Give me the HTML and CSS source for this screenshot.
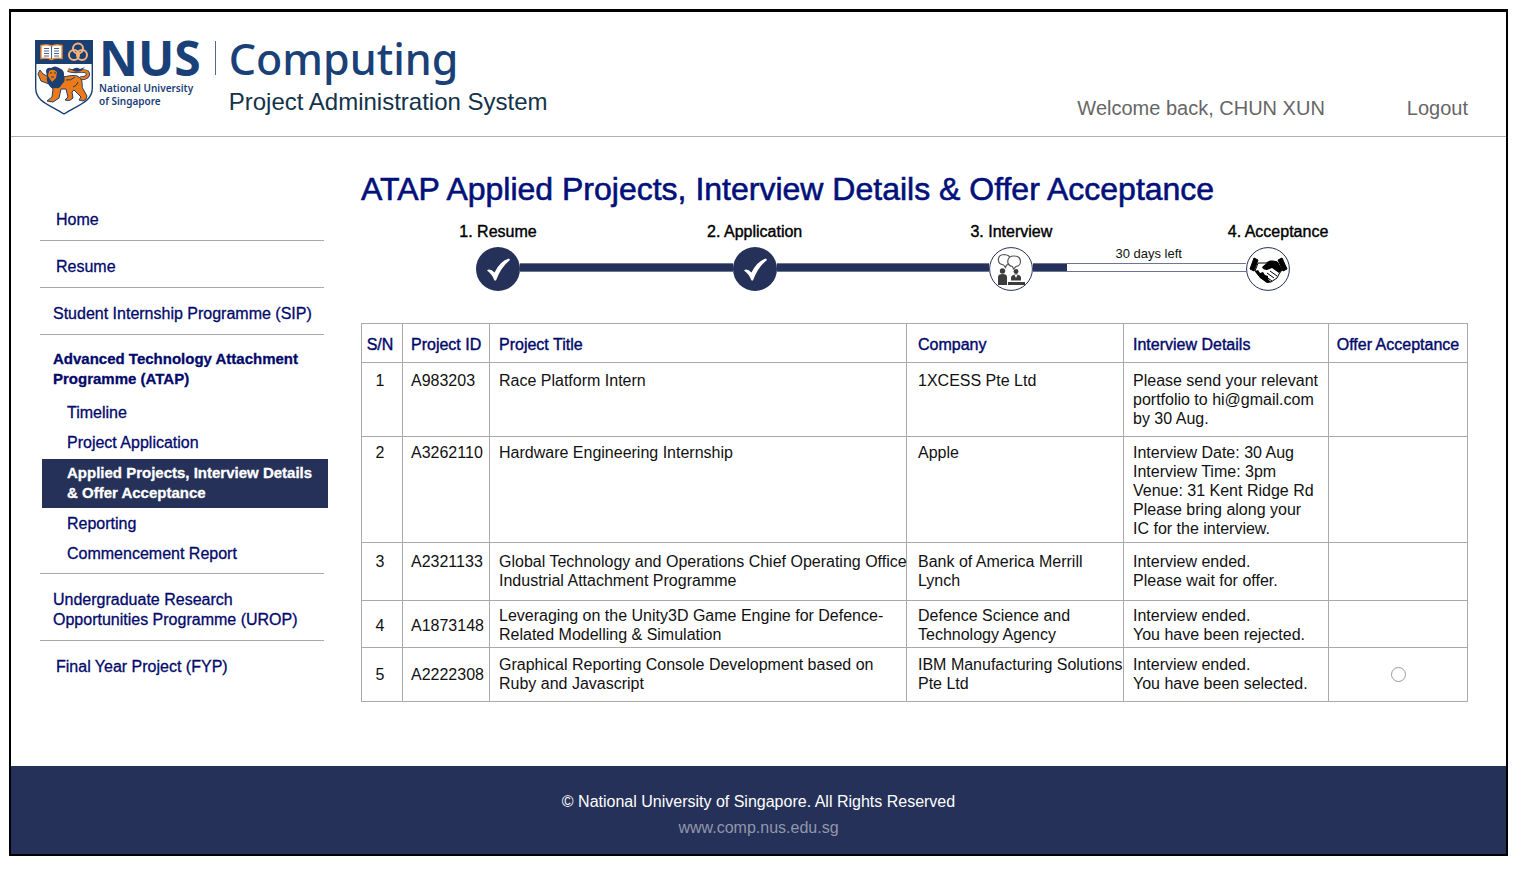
FILE: index.html
```html
<!DOCTYPE html>
<html lang="en">
<head>
<meta charset="utf-8">
<title>Project Administration System</title>
<link rel="stylesheet" href="styles.css">
</head>
<body>
<div class="frame">
  <header class="site-header">
    <div class="brand">
      <svg class="crest" viewBox="0 0 58 75" aria-hidden="true">
        <path d="M.7.7H57.3V48C57.3 62 43 65 29 74 15 65 .7 62 .7 48Z" fill="#fff" stroke="#1a3f72" stroke-width="1.4"/>
        <path d="M0 0H58V24H0Z" fill="#1a3f72"/>
        <path d="M6 5.500Q12 4 16.500 6 21 4 27 5.500V18.500Q21 17.500 16.500 19.500 12 17.500 6 18.500Z" fill="#fff" stroke="#ef8c2e" stroke-width="1.400"/>
        <path d="M16.500 6V19M9 8.500H14M9 11H14M9 13.500H14M9 16H14M19 8.500H24M19 11H24M19 13.500H24M19 16H24" stroke="#4d6489" stroke-width="1.100"/>
        <g fill="none" stroke="#f7b27c" stroke-width="2"><circle cx="43" cy="8.500" r="5"/><circle cx="39" cy="15" r="5"/><circle cx="47" cy="15" r="5"/></g>
        <path d="M45 38C50 39 55 36 52 32 48 29 40 33 33 30" fill="none" stroke="#1a3f72" stroke-width="4"/>
        <path d="M45 38C50 39 55 36 52 32 48 29 40 33 33 30" fill="none" stroke="#ed7a16" stroke-width="2.400"/>
        <path d="M37 30Q41 26 45 29L50 27 46 31Q41 33 37 30Z" fill="#1a3f72"/>
        <path d="M22 37C31 38 38 33 44 37 49 41 46 46 48 49L52 56Q52 60 48 61L44 60 46 57 39 50 37 52 38 58Q35 62 30 60L33 57 31 49 26 49 24 58 18 62 12 61 17 57 18 49 14 44 6 41 3 34 5 30 8 34 14 37Z" fill="#ed7a16" stroke="#1a3f72" stroke-width="1"/>
        <path d="M11 31Q12 27 16 28 20 25 24 28 30 30 29 36 31 41 27 44 25 49 21 48 16 49 14 45 11 41 12 37Z" fill="#1a3f72"/>
        <path d="M14 31Q18 28 22 32L21 38 17 42 13 36Z" fill="#ed7a16"/>
        <path d="M15 33h2M19 33h2M16 37h3M31 40Q36 41 40 37M38 47Q42 46 43 42" fill="none" stroke="#1a3f72" stroke-width="1"/>
      </svg>
      <div class="university">
        <span class="nus">NUS</span>
        <span class="university-name">National University<br>of Singapore</span>
      </div>
      <div class="school">
        <span class="computing">Computing</span>
        <span class="system">Project Administration System</span>
      </div>
    </div>
    <div class="account">
      <span>Welcome back, CHUN XUN</span>
      <a href="#logout">Logout</a>
    </div>
  </header>

  <div class="layout">
    <nav class="sidebar" aria-label="Main">
      <ul class="menu">
        <li class="single"><a href="#home">Home</a></li>
        <li class="single"><a href="#resume">Resume</a></li>
        <li><a href="#sip">Student Internship Programme (SIP)</a></li>
        <li class="group">
          <a class="open" href="#atap">Advanced Technology Attachment Programme (ATAP)</a>
          <ul class="submenu">
            <li><a href="#timeline">Timeline</a></li>
            <li><a href="#application">Project Application</a></li>
            <li><a class="active" href="#applied" aria-current="page">Applied Projects, Interview Details<br>&amp; Offer Acceptance</a></li>
            <li><a href="#reporting">Reporting</a></li>
            <li><a href="#commencement">Commencement Report</a></li>
          </ul>
        </li>
        <li><a href="#urop">Undergraduate Research<br>Opportunities Programme (UROP)</a></li>
        <li class="single"><a href="#fyp">Final Year Project (FYP)</a></li>
      </ul>
    </nav>

    <main>
      <h1>ATAP Applied Projects, Interview Details &amp; Offer Acceptance</h1>
      <ol class="steps">
        <li class="step">
          <span class="step-label">1. Resume</span>
          <svg class="step-icon" viewBox="0 0 44 44" aria-hidden="true"><circle cx="22" cy="22" r="22" fill="#253158"/><path d="M11 23.500Q14 21 18.500 25.500 24 14 33 11.500L34 13Q25 20 20 33.500H18.500Q16 27 11 23.500Z" fill="#fff"/></svg>
        </li>
        <li class="link"><div class="bar"><div class="fill"></div></div></li>
        <li class="step">
          <span class="step-label">2. Application</span>
          <svg class="step-icon" viewBox="0 0 44 44" aria-hidden="true"><circle cx="22" cy="22" r="22" fill="#253158"/><path d="M11 23.500Q14 21 18.500 25.500 24 14 33 11.500L34 13Q25 20 20 33.500H18.500Q16 27 11 23.500Z" fill="#fff"/></svg>
        </li>
        <li class="link"><div class="bar"><div class="fill"></div></div></li>
        <li class="step">
          <span class="step-label">3. Interview</span>
          <svg class="step-icon" viewBox="0 0 44 44" aria-hidden="true"><circle cx="22" cy="22" r="21.400" fill="#fff" stroke="#253158" stroke-width="1"/>
            <g fill="#fff" stroke="#555" stroke-width="1.200"><path d="M14.500 18C7.500 17 7.500 7.500 15.500 7.500 23 8 23 17 17.500 18L16.500 20.500Z"/><path d="M23.500 19.500C16.500 18 17.500 9 25 9 33.500 9 33 19 27 19.500L24.500 22Z"/></g>
            <g fill="#3c3c3c"><circle cx="13.500" cy="24" r="2.700"/><path d="M9 38V30Q9 27 13.500 27T18 30V38Z"/><circle cx="27" cy="24.500" r="2.400"/><path d="M22 33.500V31Q22 27.500 27 27.500T32 31V33.500Z"/><path d="M19 35H36V38H19Z"/></g>
            <path d="M25.500 28 27 31 28.500 28" fill="#fff"/></svg>
        </li>
        <li class="link">
          <span class="days">30 days left</span>
          <div class="bar" role="progressbar" aria-label="Interview period" aria-valuenow="16" aria-valuemin="0" aria-valuemax="100"><div class="fill" style="width:16%"></div></div>
        </li>
        <li class="step">
          <span class="step-label trailing">4. Acceptance</span>
          <svg class="step-icon" viewBox="0 0 44 44" aria-hidden="true"><circle cx="22" cy="22" r="21.400" fill="#fff" stroke="#253158" stroke-width="1"/>
            <path d="M8 11 12 13 8 24 4 22ZM32 13 36 11 41 22 37 24Z" fill="#000" stroke="#000" stroke-width="1"/>
            <path d="M12 16 20 16 24 14 31 15 36 23 33 27 31 31 25 35 21 35 13 29 9 24Z" fill="#fff" stroke="#000" stroke-width="1"/>
            <path d="M16 20 22 15Q27 12 32 15L36 23 33 26 26 21 21 23Q17 23 16 20ZM9 24 12 23 14 26 17 25 19 28 22 29 22 32 25 35 21 36 14 31Z" fill="#000"/>
            <path d="M21 26 28 31M24 24 31 29M19 29 26 34" fill="none" stroke="#000" stroke-width="1"/></svg>
        </li>
      </ol>

      <table class="projects">
        <colgroup><col class="c-sn"><col class="c-id"><col><col class="c-company"><col class="c-details"><col class="c-offer"></colgroup>
        <thead>
          <tr><th scope="col">S/N</th><th scope="col">Project ID</th><th scope="col">Project Title</th><th scope="col">Company</th><th scope="col">Interview Details</th><th scope="col">Offer Acceptance</th></tr>
        </thead>
        <tbody>
          <tr><td>1</td><td>A983203</td><td>Race Platform Intern</td><td>1XCESS Pte Ltd</td><td>Please send your relevant<br>portfolio to hi@gmail.com<br>by 30 Aug.</td><td></td></tr>
          <tr class="r-snug"><td>2</td><td>A3262110</td><td>Hardware Engineering Internship</td><td>Apple</td><td>Interview Date: 30 Aug<br>Interview Time: 3pm<br>Venue: 31 Kent Ridge Rd<br>Please bring along your<br>IC for the interview.</td><td></td></tr>
          <tr class="r-loose"><td>3</td><td>A2321133</td><td>Global Technology and Operations Chief Operating Office<br>Industrial Attachment Programme</td><td>Bank of America Merrill<br>Lynch</td><td>Interview ended.<br>Please wait for offer.</td><td></td></tr>
          <tr class="r-tight centered"><td>4</td><td>A1873148</td><td>Leveraging on the Unity3D Game Engine for Defence-<br>Related Modelling &amp; Simulation</td><td>Defence Science and<br>Technology Agency</td><td>Interview ended.<br>You have been rejected.</td><td></td></tr>
          <tr class="r-last centered"><td>5</td><td>A2222308</td><td>Graphical Reporting Console Development based on<br>Ruby and Javascript</td><td>IBM Manufacturing Solutions<br>Pte Ltd</td><td>Interview ended.<br>You have been selected.</td><td><input type="radio" name="offer" aria-label="Accept offer for project A2222308"></td></tr>
        </tbody>
      </table>
    </main>
  </div>

  <footer class="site-footer">
    <p>© National University of Singapore. All Rights Reserved</p>
    <a href="#comp">www.comp.nus.edu.sg</a>
  </footer>
</div>
</body>
</html>
```
FILE: styles.css
```css
* { box-sizing: border-box; }

body {
  margin: 9px 12px 0 9px;
  background: #fff;
  color: #111;
  font: 16px/19px "Liberation Sans", Arial, sans-serif;
}

a { color: inherit; text-decoration: none; }
ul, ol { list-style: none; margin: 0; padding: 0; }

.frame { border: 2px solid #000; border-top-width: 3px; }

/* Header */
.site-header {
  display: flex;
  justify-content: space-between;
  align-items: flex-end;
  padding: 28px 38px 16px 24px;
  border-bottom: 1px solid #b0b0b0;
}
.brand { display: flex; align-items: flex-start; padding-bottom: 4px; color: #1a4078; }
.crest { width: 58px; height: 75px; }
.university {
  display: flex;
  flex-direction: column;
  padding-left: 6px;
  font-family: "Noto Sans", sans-serif;
}
.nus { font-size: 48px; line-height: 36px; font-weight: 700; }
.university-name { margin-top: 6px; font-size: 10px; line-height: 13px; font-weight: 600; }
.school {
  display: flex;
  flex-direction: column;
  margin-left: 14px;
  padding-left: 14px;
  background: linear-gradient(#54698c, #54698c) 0 1px / 1px 34px no-repeat;
}
.computing { font: 500 43px/38px "Noto Sans", sans-serif; }
.system { margin-top: 10px; font-size: 24px; line-height: 28px; color: #123349; }
.account {
  display: flex;
  gap: 82px;
  color: #666;
  font-size: 20px;
  line-height: 24px;
}

/* Page body */
.layout {
  display: grid;
  grid-template-columns: 284px minmax(0, 1fr);
  column-gap: 37px;
  padding: 36px 38px 64px 29px;
}

/* Sidebar */
.sidebar { padding-top: 25px; color: #02096b; -webkit-text-stroke: 0.3px; }
.menu > li { padding: 16px 0 10px 13px; border-bottom: 1px solid #aaa; }
.menu > li.single { padding-left: 16px; }
.menu > li:first-child { padding-top: 12px; }
.menu > li:last-child { border-bottom: 0; }
.menu a { display: block; line-height: 20px; }
.menu > li.group { padding: 14px 0 4px; }
.menu .open { padding: 0 0 9px 13px; font-size: 15px; font-weight: 700; }
.submenu a { padding: 5px 0 5px 27px; }
.submenu .active {
  margin: 1px -4px 1px 2px;
  padding: 4px 0 5px 25px;
  background: #253158;
  color: #fff;
  font-size: 15px;
  font-weight: 700;
  white-space: nowrap;
}

/* Title and steps */
h1 {
  margin: 0;
  color: #02107a;
  font-size: 32px;
  line-height: 32px;
  font-weight: 400;
  -webkit-text-stroke: 0.6px;
}
.steps { display: flex; align-items: flex-end; padding: 17px 178px 0 115px; }
.step { display: flex; flex-direction: column; align-items: center; width: 44px; }
.step-label {
  margin-bottom: 6px;
  color: #000;
  white-space: nowrap;
  -webkit-text-stroke: 0.4px;
}
.step-label.trailing { padding-left: 20px; }
.step-icon { display: block; width: 44px; height: 44px; }
.link { display: flex; flex: 1; flex-direction: column; align-items: center; margin-bottom: 19px; }
.days { padding-left: 18px; margin-bottom: 2px; font-size: 13px; line-height: 15px; }
.bar {
  align-self: stretch;
  height: 9px;
  border: solid #6c7596;
  border-width: 1px 0;
}
.fill { height: 7px; background: #253158; }

/* Table */
.projects {
  width: 100%;
  margin-top: 32px;
  border-collapse: collapse;
  table-layout: fixed;
}
.c-sn { width: 41px; }
.c-id { width: 87px; }
.c-company { width: 217px; }
.c-details { width: 205px; }
.c-offer { width: 139px; }
th, td {
  padding: 8px 0 8px 9px;
  border: 1px solid #aaa;
  text-align: left;
  vertical-align: top;
  white-space: nowrap;
}
th {
  padding-top: 11px;
  color: #02096b;
  font-weight: 400;
  -webkit-text-stroke: 0.4px;
}
th:nth-child(2), td:nth-child(2) { padding-left: 8px; }
th:nth-child(4), td:nth-child(4) { padding-left: 11px; }
th:first-child, td:first-child { padding-left: 0; padding-right: 4px; text-align: center; }
th:last-child, td:last-child { padding-left: 0; text-align: center; }
.r-snug td { padding-top: 6px; padding-bottom: 4px; }
.r-loose td { padding-top: 9px; padding-bottom: 10px; }
.r-tight td { padding-top: 5px; padding-bottom: 3px; }
.r-last td { padding-top: 7px; padding-bottom: 8px; }
.centered td:first-child, .centered td:nth-child(2), .centered td:last-child { vertical-align: middle; }
input[type="radio"] {
  appearance: none;
  display: block;
  width: 15px;
  height: 15px;
  margin: 0 auto;
  border: 1px solid #999;
  border-radius: 50%;
  background: #fff;
}

/* Footer */
.site-footer {
  padding: 26px 0 17px;
  background: #253158;
  color: #fff;
  text-align: center;
}
.site-footer p { margin: 0 0 6px; line-height: 20px; }
.site-footer a { color: #9297ac; }
```
